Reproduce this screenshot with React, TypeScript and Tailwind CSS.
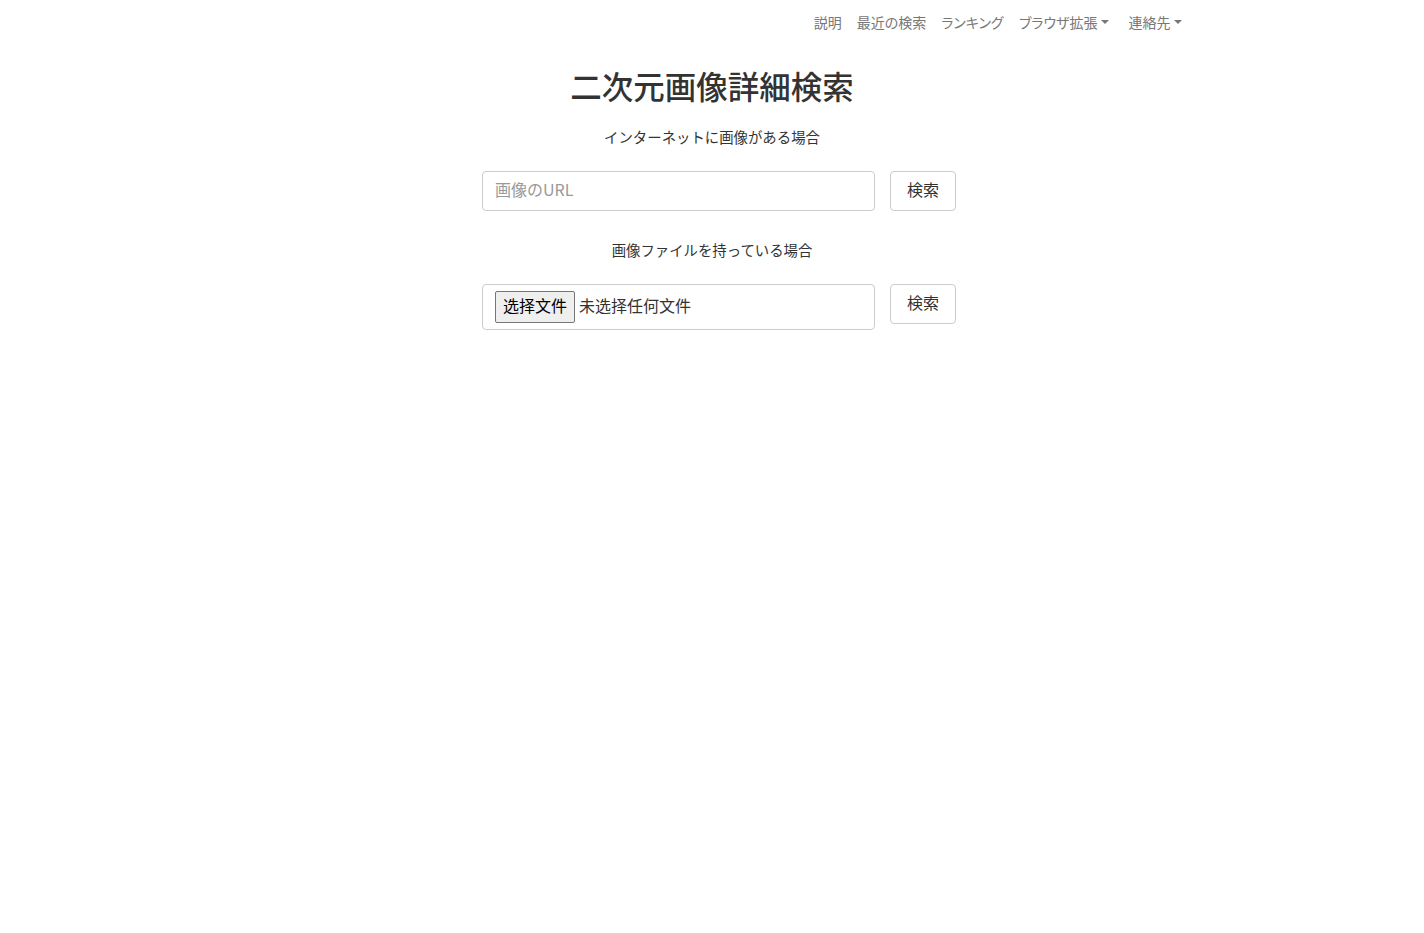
import React from "react";

const jp = { fontFamily: '"Noto Sans CJK JP", "Noto Sans CJK SC", sans-serif' };

function Caret() {
  return (
    <span className="ml-[3px] inline-block h-0 w-0 border-x-[4px] border-t-[4px] border-x-transparent border-t-[#777] align-middle" />
  );
}

export default function App() {
  const links: { label: string; caret?: boolean; cls: string }[] = [
    { label: "説明", cls: "px-[7.5px]" },
    { label: "最近の検索", cls: "px-[7.5px]" },
    { label: "ランキング", cls: "px-[7.5px]" },
    { label: "ブラウザ拡張", caret: true, cls: "pl-[8px] pr-[10px]" },
    { label: "連絡先", caret: true, cls: "pl-[10px] pr-[7.5px]" },
  ];
  return (
    <div className="min-h-[933px] bg-white text-[#333]" style={jp}>
      <div className="mx-auto w-[970px]">
        <nav className="flex h-[44px] items-center justify-end pr-[8px] [font-feature-settings:'palt']">
          {links.map((l, i) => (
            <a
              key={i}
              className={`flex items-center text-[14px] leading-[20px] text-[#777] ${l.cls}`}
            >
              {l.label}
              {l.caret && <Caret />}
            </a>
          ))}
        </nav>
        <h1 className="mt-[19px] text-center text-[31.5px] font-medium leading-[44px] text-[#333]">
          二次元画像詳細検索
        </h1>
        <p className="mt-[20px] text-center text-[14.4px] leading-[20px]">
          インターネットに画像がある場合
        </p>
        <div className="mt-[24px] flex items-start gap-[15px] pl-[255px]">
          <div className="flex h-[40px] w-[393px] items-center rounded-[4px] border border-[#ccc] px-[12px] pb-[5px] text-[16px] text-[#999]">
            画像のURL
          </div>
          <button className="flex h-[40px] w-[66px] items-center justify-center rounded-[4px] border border-[#ccc] bg-white pb-[5px] text-[16px] text-[#333]">
            検索
          </button>
        </div>
        <p className="mt-[29px] text-center text-[14.4px] leading-[20px]">
          画像ファイルを持っている場合
        </p>
        <div className="mt-[24px] flex items-start gap-[15px] pl-[255px]">
          <div
            className="flex h-[46px] w-[393px] items-center rounded-[4px] border border-[#ccc] px-[12px] text-[16px] text-[#333]"
            style={{ fontFamily: '"Noto Sans CJK SC", sans-serif' }}
          >
            <span className="flex h-[32px] w-[80px] items-center justify-center rounded-[2px] border border-[#767676] bg-[#efefef] pb-[4px] text-[16px] text-black">
              选择文件
            </span>
            <span className="mb-[5px] ml-[4px]">未选择任何文件</span>
          </div>
          <button className="flex h-[40px] w-[66px] items-center justify-center rounded-[4px] border border-[#ccc] bg-white pb-[5px] text-[16px] text-[#333]">
            検索
          </button>
        </div>
      </div>
    </div>
  );
}
